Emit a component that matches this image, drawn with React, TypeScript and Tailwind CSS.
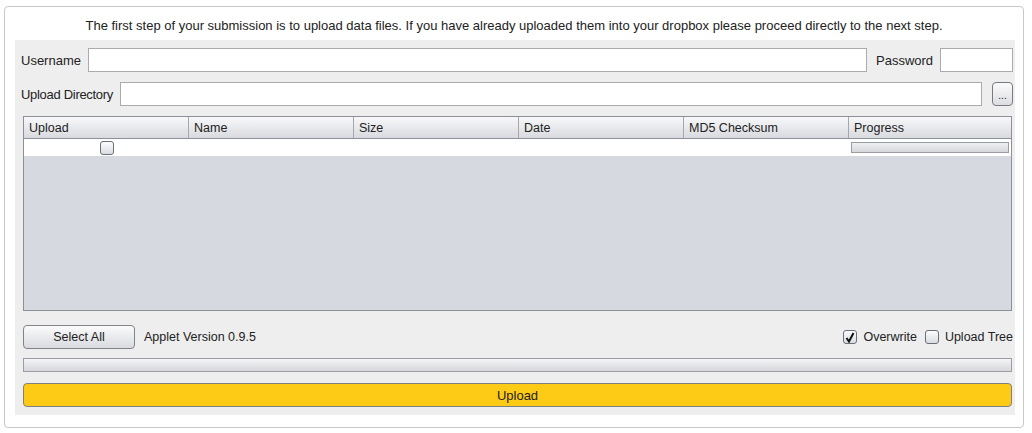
const columns = ["Upload", "Name", "Size", "Date", "MD5 Checksum", "Progress"];

const Checkbox = ({ checked = false }: { checked?: boolean }) => (
  <span className="flex h-[14px] w-[14px] items-center justify-center rounded-[3px] border border-[#6b6f78] bg-gradient-to-b from-[#fdfdfd] to-[#d9dce2]">
    {checked && (
      <svg width="10" height="11" viewBox="0 0 10 11">
        <path d="M1.5 6 L4 9.5 L8.5 1" fill="none" stroke="#111" strokeWidth="2" />
      </svg>
    )}
  </span>
);

const TextInput = ({ className }: { className: string }) => (
  <div className={`h-[24px] border border-[#a9abb0] bg-white ${className}`} />
);

export default function App() {
  return (
    <div className="pl-[4px] pr-[8px] pt-[6px] font-['Liberation_Sans',Arial,sans-serif] text-[13px] text-[#222]">
      <div className="rounded-[4px] border border-[#c8c8c8] bg-white">
        <div className="flex h-[33px] items-center justify-center pt-[4px]">
          The first step of your submission is to upload data files. If you have already uploaded them into your dropbox please proceed directly to the next step.
        </div>
        <div className="mb-[12px] ml-[10px] mr-[8px] flex flex-col bg-[#eeeeee] pb-[8px] pl-[6px] pr-[2px] pt-[8px]">
          <div className="flex items-center">
            <span className="w-[67px] whitespace-nowrap pt-[2px]">Username</span>
            <TextInput className="flex-1" />
            <span className="ml-[9px] w-[64px] whitespace-nowrap pt-[2px]">Password</span>
            <TextInput className="w-[73px]" />
          </div>
          <div className="mt-[10px] flex items-center">
            <span className="w-[99px] whitespace-nowrap pt-[2px] tracking-[-0.3px]">Upload Directory</span>
            <TextInput className="flex-1" />
            <button className="ml-[10px] flex h-[24px] w-[21px] items-end justify-center rounded-[4px] border border-[#777a80] bg-gradient-to-b from-[#fbfbfb] to-[#dcdde1] pb-[4px] text-[10px] leading-none">
              ...
            </button>
          </div>

          <div className="ml-[2px] mr-[1px] mt-[10px] flex h-[195px] flex-col border border-[#8c9099] bg-[#d6d9df] text-[12.5px]">
            <div className="flex h-[22px] border-b border-[#8c9099] bg-gradient-to-b from-[#f8f8fa] to-[#d9dadf]">
              {columns.map((c, i) => (
                <div
                  key={c}
                  className={`flex items-center pl-[5px] pt-[2px] ${i < 5 ? "w-[165px] border-r border-[#a3a7ae]" : "flex-1"}`}
                >
                  {c}
                </div>
              ))}
            </div>
            <div className="flex h-[17px] bg-white">
              <div className="flex w-[165px] items-center justify-center">
                <Checkbox />
              </div>
              <div className="w-[660px]" />
              <div className="flex flex-1 items-center px-[2px]">
                <div className="h-[11px] w-full border border-[#999ca2] bg-gradient-to-b from-[#eeeff1] to-[#d6d8dc]" />
              </div>
            </div>
          </div>

          <div className="ml-[2px] mt-[14px] flex h-[24px] items-center text-[12.5px]">
            <button className="h-[24px] w-[112px] rounded-[4px] border border-[#80838a] bg-gradient-to-b from-[#fbfbfb] to-[#d9dadf] pt-[1px]">
              Select All
            </button>
            <span className="ml-[9px] pt-[1px]">Applet Version 0.9.5</span>
            <div className="ml-auto flex items-center">
              <Checkbox checked />
              <span className="ml-[6px] pt-[1px]">Overwrite</span>
              <span className="ml-[8px]">
                <Checkbox />
              </span>
              <span className="ml-[6px] pt-[1px]">Upload Tree</span>
            </div>
          </div>

          <div className="ml-[2px] mr-[1px] mt-[9px] h-[14px] border border-[#9a9da3] bg-gradient-to-b from-[#f4f5f6] to-[#d5d7db]" />

          <button className="ml-[2px] mr-[1px] mt-[11px] h-[24px] rounded-[4px] border border-[#808080] bg-[#fdcb16] pt-[1px]">
            Upload
          </button>
        </div>
      </div>
    </div>
  );
}
